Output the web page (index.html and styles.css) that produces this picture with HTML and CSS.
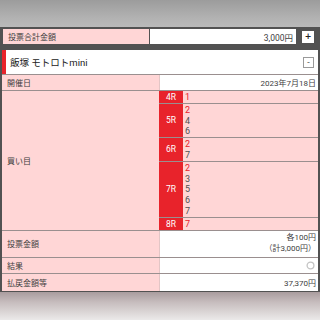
FILE: index.html
```html
<!DOCTYPE html>
<html lang="ja">
<head>
    <meta charset="UTF-8">
    <meta name="viewport" content="width=device-width, initial-scale=1.0">
    <title>投票内容</title>
    <link rel="stylesheet" href="styles.css">
</head>
<body>
    <div class="page">
        <div class="frame">
            <div class="total-row">
                <div class="total-label">投票合計金額</div>
                <div class="total-value">3,000円</div>
                <button class="sq-btn">+</button>
            </div>

            <div class="venue">
                <span class="venue-name">飯塚 モトロトmini</span>
                <button class="sq-btn outline">-</button>
            </div>

            <div class="info">
                <div class="row row-date">
                    <div class="label">開催日</div>
                    <div class="value">2023年7月18日</div>
                </div>

                <div class="row">
                    <div class="label">買い目</div>
                    <div class="bets">
                        <div class="race">
                            <div class="race-no">4R</div>
                            <div class="nums"><div class="num first">1</div></div>
                        </div>
                        <div class="race">
                            <div class="race-no">5R</div>
                            <div class="nums">
                                <div class="num first">2</div>
                                <div class="num">4</div>
                                <div class="num">6</div>
                            </div>
                        </div>
                        <div class="race">
                            <div class="race-no">6R</div>
                            <div class="nums">
                                <div class="num first">2</div>
                                <div class="num">7</div>
                            </div>
                        </div>
                        <div class="race">
                            <div class="race-no">7R</div>
                            <div class="nums">
                                <div class="num first">2</div>
                                <div class="num">3</div>
                                <div class="num">5</div>
                                <div class="num">6</div>
                                <div class="num">7</div>
                            </div>
                        </div>
                        <div class="race">
                            <div class="race-no">8R</div>
                            <div class="nums"><div class="num first">7</div></div>
                        </div>
                    </div>
                </div>

                <div class="row row-amount">
                    <div class="label">投票金額</div>
                    <div class="value stack">
                        <div>各100円</div>
                        <div>（計3,000円）</div>
                    </div>
                </div>

                <div class="row row-result">
                    <div class="label">結果</div>
                    <div class="value">
                        <svg class="ring" width="9" height="9" viewBox="0 0 9 9">
                            <circle cx="4.5" cy="4.5" r="3.4" fill="#fff" stroke="#c4c4c4" stroke-width="1.3"/>
                        </svg>
                    </div>
                </div>

                <div class="row row-payout">
                    <div class="label">払戻金額等</div>
                    <div class="value">37,370円</div>
                </div>
            </div>
        </div>
    </div>
</body>
</html>
```

FILE: styles.css
```css
body {
    margin: 0;
    width: 320px;
    height: 320px;
    overflow: hidden;
    font-family: Roboto, "Noto Sans CJK JP", sans-serif;
    font-size: 8px;
    color: #3e3e3e;
    background: linear-gradient(to bottom, #9c9c9c 0, #b2b2b2 18px, #bababa 27px, #a99c9e 292px, #c6bcbd 302px, #ebe9e9 320px);
}

.page {
    padding-top: 27px;
}

.frame {
    background-color: #525252;
    padding: 2px 2px 1px 2px;
}

.total-row {
    display: flex;
    align-items: center;
    height: 15px;
    margin-left: 1px;
    margin-bottom: 6px;
}

.total-label {
    width: 146px;
    height: 100%;
    box-sizing: border-box;
    padding-left: 5px;
    background-color: #ffd6d6;
    display: flex;
    align-items: center;
}

.total-value {
    width: 146px;
    height: 100%;
    margin-left: 1px;
    box-sizing: border-box;
    padding-right: 3px;
    background-color: #ffffff;
    display: flex;
    align-items: center;
    justify-content: flex-end;
    font-size: 8.5px;
}

.sq-btn {
    width: 12px;
    height: 12px;
    margin-left: 6px;
    padding: 0;
    border: none;
    background-color: #ffffff;
    color: #222222;
    font-family: "DejaVu Sans", sans-serif;
    font-size: 8px;
    font-weight: bold;
    line-height: 12px;
}

.sq-btn.outline {
    width: 11px;
    height: 11px;
    line-height: 9px;
    border: 1px solid #9a9a9a;
    font-weight: normal;
    color: #555555;
}

.venue {
    height: 24px;
    background-color: #ffffff;
    border-left: 4px solid #e8232b;
    padding: 0 4px;
    display: flex;
    align-items: center;
    justify-content: space-between;
}

.venue-name {
    font-size: 9.5px;
    color: #222222;
}

.info {
    background-color: #ffffff;
    border-top: 1px solid #9a8f8f;
}

.row {
    display: flex;
    border-bottom: 1px solid #9a8f8f;
}

.row:last-child {
    border-bottom: none;
}

.label {
    width: 158px;
    box-sizing: border-box;
    padding-left: 5px;
    background-color: #ffd6d6;
    border-right: 1px solid #e3c6c6;
    display: flex;
    align-items: center;
}

.value {
    flex: 1;
    padding-right: 2px;
    display: flex;
    align-items: center;
    justify-content: flex-end;
}

.row-date { height: 15px; }
.row-amount { height: 26px; }
.row-result { height: 15px; }
.row-payout { height: 17px; }

.value.stack {
    flex-direction: column;
    align-items: flex-end;
    justify-content: flex-start;
    padding-top: 1px;
    line-height: 11px;
}

.ring {
    margin-right: 1px;
}

.bets {
    flex: 1;
    margin-left: -1px;
}

.race {
    display: flex;
    border-bottom: 1px solid #9a8f8f;
}

.race:last-child {
    border-bottom: none;
}

.race-no {
    width: 24px;
    background-color: #e8232b;
    color: #ffffff;
    font-size: 8.5px;
    display: flex;
    align-items: center;
    justify-content: center;
}

.nums {
    flex: 1;
    padding: 1px 0 0 2px;
    background-color: #ffd6d6;
}

.num {
    font-size: 9px;
    line-height: 10.8px;
    color: #505050;
}

.num.first {
    color: #e8232b;
}
```
